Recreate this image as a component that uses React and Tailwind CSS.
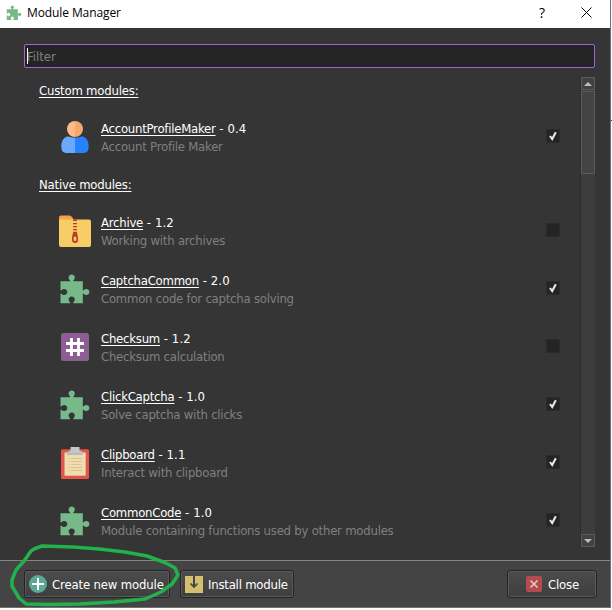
import React from "react";

const UI = "font-['DejaVu_Sans_Condensed','DejaVu_Sans',sans-serif] [font-stretch:condensed]";

function Puzzle({ className }) {
  return (
    <svg viewBox="0 0 32 32" className={className} fill="#78b989">
      <path d="M1.5 8.3H11V7.2A3.1 3.1 0 1 1 14.4 7.2V8.3H23.8V17.3H24.7A3.1 3.1 0 1 1 24.7 20.7H23.8V30.2H14.4V29.1A3.1 3.1 0 1 0 11 29.1V30.2H1.5V20.7H2.6A3.1 3.1 0 1 0 2.6 17.3H1.5Z" />
    </svg>
  );
}

function User({ className }) {
  return (
    <svg viewBox="0 0 32 32" className={className}>
      <path d="M16 15.5C21 17 21 15.5 24 15.5C28 17 29.7 21 29.7 25C29.7 30 28 32 24 32H16Z" fill="#2682ff" />
      <path d="M16 15.5C11 17 11 15.5 8 15.5C4 17 2.3 21 2.3 25C2.3 30 4 32 8 32H16Z" fill="#6ba7ff" />
      <circle cx="16" cy="8" r="8.8" fill="#353535" />
      <path d="M16 0A8 8 0 0 0 16 16Z" fill="#ffbb85" />
      <path d="M16 0A8 8 0 0 1 16 16Z" fill="#f5a86c" />
    </svg>
  );
}

function Folder({ className }) {
  return (
    <svg viewBox="0 0 32 32" className={className}>
      <path d="M0 2.5Q0 .5 2 .5H10.5Q12 .5 13 2L15 5V12H0Z" fill="#f5a04e" />
      <path d="M0 5.5Q0 4.6 2 4.6H30Q32 4.6 32 6.6V30Q32 32 30 32H2Q0 32 0 30Z" fill="#f8cc66" />
      <path d="M14 4.6h4v1.4h-4zM14 8h4v1.2h-4zM14 11h4v1.2h-4zM14 14h4v1.2h-4z" fill="#bb3c2c" />
      <path fillRule="evenodd" d="M14.2 16.8H17.8L19 22.5V25A3 3 0 0 1 13 25V22.5ZM16 21.5A1.4 1.6 0 0 0 14.6 23.2V24.5A1.4 1.5 0 0 0 17.4 24.5V23.2A1.4 1.6 0 0 0 16 21.5Z" fill="#bb3c2c" />
    </svg>
  );
}

function Hash({ className }) {
  return (
    <svg viewBox="0 0 32 32" className={className}>
      <rect x="2" y="2" width="28" height="28" rx="2.5" fill="#8b5f92" />
      <path d="M12.5 7V25M19.5 7V25M7 12.5H25M7 19.5H25" stroke="#fff" strokeWidth="2.8" />
    </svg>
  );
}

function Clipboard({ className }) {
  return (
    <svg viewBox="0 0 32 32" className={className}>
      <rect x="2" y="2.2" width="28" height="29.8" rx="1.5" fill="#e4544a" />
      <rect x="5.5" y="5.5" width="21.2" height="23.2" fill="#f0dcac" />
      <path d="M9 11.5h1.5M12 11.5h11M9 14.5h1.5M12 14.5h11M9 17.5h1.5M12 17.5h11M9 20.5h1.5M12 20.5h11M9 23.5h1.5M12 23.5h11" stroke="#d8c297" strokeWidth="1" />
      <path d="M11.5 0H20.5V3.5L24 5V8H8V5L11.5 3.5Z" fill="#c3c7ca" />
      <path d="M8 5.5H24V8H8Z" fill="#b5bcc0" />
    </svg>
  );
}

function Check({ on }) {
  return (
    <div className="mr-[21px] mt-[-2px] h-[14px] w-[14px] shrink-0 border border-[#2b2b2b] bg-[#242424]">
      {on && (
        <svg viewBox="0 0 12 12" className="block h-3 w-3">
          <path d="M3 6L5.2 9L8.8 2.2" fill="none" stroke="#e8e8e8" strokeWidth="2.1" />
        </svg>
      )}
    </div>
  );
}

function Row({ icon: Icon, name, version, text, on }) {
  return (
    <div className="flex h-[58px] items-center pl-[35px]">
      <Icon className="h-8 w-8 shrink-0" />
      <div className="ml-[10px] flex-1 whitespace-nowrap pt-[2px] text-[13px] leading-[18px]">
        <div className="text-white">
          <span className="tracking-[-0.24px] underline underline-offset-2">{name}</span>
          <span className="tracking-[0.08px]"> - {version}</span>
        </div>
        <div className="tracking-[-0.23px] text-[#808080]">{text}</div>
      </div>
      <Check on={on} />
    </div>
  );
}

function Heading({ children }) {
  return (
    <div className="flex h-9 items-center pt-[2px] pl-[15px] text-[13px] tracking-[-0.2px] text-white">
      <span className="underline underline-offset-2">{children}</span>
    </div>
  );
}

function Arrow({ down }) {
  return (
    <div className="flex h-[13px] w-[14px] shrink-0 items-center justify-center border border-[#5c5c5c] bg-[#424242]">
      <svg viewBox="0 0 8 4" className="h-1 w-2" fill="#bdbdbd">
        <path d={down ? "M0 0H8L4 4Z" : "M0 4H8L4 0Z"} />
      </svg>
    </div>
  );
}

function Button({ className, children }) {
  return (
    <div className={"flex h-[28px] items-center rounded-[3px] border border-[#242424] bg-linear-to-b from-[#4c4c4c] to-[#3e3e3e] text-[13px] tracking-[-0.15px] whitespace-nowrap text-white shadow-[inset_0_0_0_1px_#5a5a5a] " + className}>
      {children}
    </div>
  );
}

export default function App() {
  return (
    <div className={"relative flex h-[610px] w-[612px] flex-col overflow-hidden bg-white " + UI}>
      <div className="flex h-[608px] w-[611px] flex-col border-r border-b border-[#707070] bg-[#353535]">
        <header className="flex h-7 shrink-0 items-center bg-white text-black [font-stretch:normal]">
          <Puzzle className="ml-[6px] mt-[-3px] h-4 w-4" />
          <span className="ml-[5px] mt-[-3px] font-['Open_Sans','Noto_Sans',sans-serif] text-[12px] tracking-[-0.1px]">Module Manager</span>
          <span className="ml-auto mt-[-3px] font-['Open_Sans','Noto_Sans',sans-serif] text-[14px]">?</span>
          <svg viewBox="0 0 11 11" className="mr-[18px] ml-[36px] mt-[-4px] h-[11px] w-[11px]">
            <path d="M.5 .5L10.5 10.5M10.5 .5L.5 10.5" stroke="#000" />
          </svg>
        </header>
        <div className="mt-4 ml-6 flex h-6 w-[571px] shrink-0 items-center rounded-[2px] border border-[#a95fd6] bg-[#242424] pl-[2px] text-[13px] text-[#808080]">
          <span className="h-4 w-px bg-white" />
          <span className="ml-[-1px] pt-[2px]">Filter</span>
        </div>
        <div className="mt-1 flex h-[475px] shrink-0 pl-6">
          <main className="w-[557px] overflow-hidden">
            <Heading>Custom modules:</Heading>
            <Row icon={User} name="AccountProfileMaker" version="0.4" text="Account Profile Maker" on />
            <Heading>Native modules:</Heading>
            <Row icon={Folder} name="Archive" version="1.2" text="Working with archives" />
            <Row icon={Puzzle} name="CaptchaCommon" version="2.0" text="Common code for captcha solving" on />
            <Row icon={Hash} name="Checksum" version="1.2" text="Checksum calculation" />
            <Row icon={Puzzle} name="ClickCaptcha" version="1.0" text="Solve captcha with clicks" on />
            <Row icon={Clipboard} name="Clipboard" version="1.1" text="Interact with clipboard" on />
            <Row icon={Puzzle} name="CommonCode" version="1.0" text="Module containing functions used by other modules" on />
          </main>
          <div className="mt-[5px] flex h-[470px] w-[14px] flex-col bg-[#3d3d3d] shadow-[-1px_0_0_#2d2d2d]">
            <Arrow />
            <div className="mt-px h-[83px] border border-[#5c5c5c] bg-[#444]" />
            <div className="flex-1" />
            <Arrow down />
          </div>
        </div>
        <footer className="mt-auto flex h-[47px] shrink-0 items-start border-t border-[#858585] bg-[#444444] pt-[9px] pl-6">
          <Button className="w-[146px] pl-1">
            <svg viewBox="0 0 18 18" className="h-[18px] w-[18px]">
              <circle cx="9" cy="9" r="9" fill="#5da892" />
              <path d="M9 3V15M3 9H15" stroke="#fff" strokeWidth="2" />
            </svg>
            <span className="ml-[5px] pt-[2px]">Create new module</span>
          </Button>
          <Button className="ml-[10px] w-[114px] pl-1">
            <svg viewBox="0 0 18 17" className="h-[17px] w-[18px]">
              <path d="M0 0H8V9H10V0H18V17H0Z" fill="#d6be71" />
              <path d="M9 1V11M5.5 7.5L9 11L12.5 7.5" fill="none" stroke="#444" strokeWidth="1.7" />
            </svg>
            <span className="ml-[5px] pt-[2px] tracking-[-0.22px]">Install module</span>
          </Button>
          <Button className="ml-[213px] w-[90px] pl-[18px]">
            <svg viewBox="0 0 16 16" className="h-4 w-4">
              <rect width="16" height="16" rx="2" fill="#b34a4d" />
              <path d="M4.5 4.5L11.5 11.5M11.5 4.5L4.5 11.5" stroke="#e7cccc" strokeWidth="1.5" />
            </svg>
            <span className="ml-[6px] pt-[2px]">Close</span>
          </Button>
        </footer>
      </div>
      <svg className="pointer-events-none absolute left-0 top-[540px] h-[70px] w-[190px]" viewBox="0 540 190 70" fill="none" stroke="#22b14c" strokeWidth="3.5" strokeLinejoin="round">
        <path d="M34 549L31 551L24 561L16 570L12 580L12 586L19 598L26 604L50 604.5L80 604L114 602L145 599L161 592L172 584L178 575L175 568L166 563L147 556L125 552L99 549L73 547L42 546L34 549Z" />
      </svg>
      <span className="absolute top-[120px] right-0 h-px w-px bg-[#2d4a5a]" />
    </div>
  );
}
